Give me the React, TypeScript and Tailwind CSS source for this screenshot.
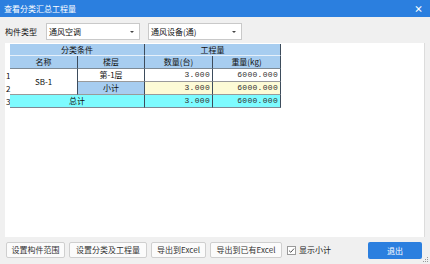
import React from "react";

const CJK = '"Noto Sans CJK SC", "Microsoft YaHei", sans-serif';
const MONO = '"Liberation Mono", "Noto Sans CJK SC", monospace';

const Combo = ({ text, width }: { text: string; width: string }) => (
  <div
    className={`flex h-[17px] ${width} items-center justify-between border border-[#c9c9c9] bg-white pl-[2px] pr-[5px]`}
  >
    <span className="text-[8px] text-[#111]">{text}</span>
    <span className="h-0 w-0 border-x-[2px] border-t-[2px] border-x-transparent border-t-[#444]" />
  </div>
);

const Btn = ({ label, width }: { label: string; width: string }) => (
  <button
    className={`flex h-[16px] ${width} items-center justify-center rounded-[2px] border border-[#cfcfcf] bg-[#fbfbfb] text-[8px] text-[#333]`}
  >
    {label}
  </button>
);

const hdr = "flex items-center justify-center bg-[#a7cdf0] text-[8px] text-[#111]";
const num = "flex items-center justify-end pr-[2px] text-[8px] tracking-[0.3px] text-[#333]";

export default function App() {
  return (
    <div
      className="flex h-[264px] w-[430px] flex-col bg-[#f0f0f0]"
      style={{ fontFamily: CJK }}
    >
      {/* Title bar */}
      <div className="flex h-[17px] items-center justify-between bg-[#2b7fdf] pl-[4px] pr-[7px]">
        <span className="text-[8px] text-white">查看分类汇总工程量</span>
        <span className="text-[9px] font-bold leading-none text-white">×</span>
      </div>

      {/* Filters */}
      <div className="flex h-[26px] items-start gap-[8px] pl-[5px] pt-[6px]">
        <div className="flex h-[17px] items-center">
          <span className="w-[33px] text-[8px] text-[#111]">构件类型</span>
        </div>
        <div className="flex gap-[8px]">
          <Combo text="通风空调" width="w-[94px]" />
          <Combo text="通风设备(通)" width="w-[94px]" />
        </div>
      </div>

      {/* Result panel */}
      <div className="mx-[5px] flex-1 border-r border-[#dcdcdc] bg-white pt-[1px]">
        <div className="grid grid-cols-[5px_68px_67px_68px_68px] grid-rows-[12px_13px_13px_13px_13px]">
          <div />
          <div className={`${hdr} col-span-2 border-b border-r border-b-[#e6f0fa] border-r-[#3d4c5c]`}>
            分类条件
          </div>
          <div className={`${hdr} col-span-2 border-b border-r border-b-[#e6f0fa] border-r-[#3d4c5c]`}>
            工程量
          </div>

          <div />
          <div className={`${hdr} border-b border-r border-b-[#7d8a96] border-r-[#3d4c5c]`}>名称</div>
          <div className={`${hdr} border-b border-r border-b-[#7d8a96] border-r-[#3d4c5c]`}>楼层</div>
          <div className={`${hdr} border-b border-r border-b-[#7d8a96] border-r-[#3d4c5c]`}>数量(台)</div>
          <div className={`${hdr} border-b border-r border-b-[#7d8a96] border-r-[#3d4c5c]`}>重量(kg)</div>

          <div className="pl-[1px] text-[8px] leading-[13px] text-[#111]">1</div>
          <div className="row-span-2 flex items-center justify-center border-b border-r border-b-[#9a9a9a] border-r-[#3d4c5c] bg-white text-[8px] text-[#111]">
            SB-1
          </div>
          <div className="flex items-center justify-center border-b border-r border-b-[#9a9a9a] border-r-[#3d4c5c] bg-white text-[8px] text-[#111]">
            第-1层
          </div>
          <div className={`${num} border-b border-r border-b-[#9a9a9a] border-r-[#3d4c5c] bg-white`} style={{ fontFamily: MONO }}>
            3.000
          </div>
          <div className={`${num} border-b border-r border-b-[#9a9a9a] border-r-[#3d4c5c] bg-white`} style={{ fontFamily: MONO }}>
            6000.000
          </div>

          <div className="pl-[1px] text-[8px] leading-[13px] text-[#111]">2</div>
          <div className={`${hdr} border-b border-r border-b-[#9a9a9a] border-r-[#3d4c5c]`}>小计</div>
          <div className={`${num} border-b border-r border-b-[#9a9a9a] border-r-[#3d4c5c] bg-[#fdfbd6]`} style={{ fontFamily: MONO }}>
            3.000
          </div>
          <div className={`${num} border-b border-r border-b-[#9a9a9a] border-r-[#3d4c5c] bg-[#fdfbd6]`} style={{ fontFamily: MONO }}>
            6000.000
          </div>

          <div className="pl-[1px] text-[8px] leading-[13px] text-[#111]">3</div>
          <div className="col-span-2 flex items-center justify-center border-b border-r border-b-[#7d8a96] border-r-[#3d4c5c] bg-[#7dfbff] text-[8px] text-[#111]">
            总计
          </div>
          <div className={`${num} border-b border-r border-b-[#7d8a96] border-r-[#3d4c5c] bg-[#7dfbff]`} style={{ fontFamily: MONO }}>
            3.000
          </div>
          <div className={`${num} border-b border-r border-b-[#7d8a96] border-r-[#3d4c5c] bg-[#7dfbff]`} style={{ fontFamily: MONO }}>
            6000.000
          </div>
        </div>
      </div>

      {/* Bottom actions */}
      <div className="relative flex h-[27px] items-start pl-[6px] pt-[5px]">
        <div className="flex items-center gap-[4px]">
          <Btn label="设置构件范围" width="w-[59px]" />
          <Btn label="设置分类及工程量" width="w-[78px]" />
          <Btn label="导出到Excel" width="w-[55px]" />
          <Btn label="导出到已有Excel" width="w-[72px]" />
          <div className="ml-[1px] flex items-center gap-[3px]">
            <span className="flex h-[9px] w-[9px] items-center justify-center border border-[#9a9a9a] bg-white">
              <svg width="7" height="7" viewBox="0 0 7 7">
                <path d="M1 3.6 L2.8 5.3 L6 1.6" fill="none" stroke="#555" strokeWidth="1" />
              </svg>
            </span>
            <span className="text-[8px] text-[#222]">显示小计</span>
          </div>
        </div>
        <button className="ml-auto mr-[8px] flex h-[17px] w-[54px] items-center justify-center rounded-[2px] bg-[#2b7fdf] text-[8px] text-white">
          退出
        </button>
        <svg className="absolute bottom-[1px] right-[1px]" width="6" height="6" viewBox="0 0 6 6">
          <rect x="4" y="0" width="1" height="1" fill="#999" />
          <rect x="2" y="2" width="1" height="1" fill="#999" />
          <rect x="4" y="2" width="1" height="1" fill="#999" />
          <rect x="0" y="4" width="1" height="1" fill="#999" />
          <rect x="2" y="4" width="1" height="1" fill="#999" />
          <rect x="4" y="4" width="1" height="1" fill="#999" />
        </svg>
      </div>
    </div>
  );
}
